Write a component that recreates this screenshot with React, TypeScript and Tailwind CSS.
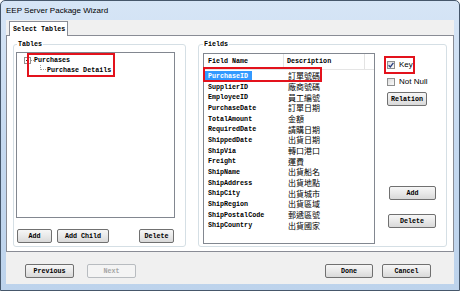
import React from "react";

const mono = "font-['Liberation_Mono',monospace] font-bold";
const sans = "font-['Liberation_Sans',sans-serif]";
const cjk = "font-['Noto_Sans_CJK_TC',sans-serif]";

const fields: [string, string][] = [
  ["PurchaseID", "訂單號碼"],
  ["SupplierID", "廠商號碼"],
  ["EmployeeID", "員工編號"],
  ["PurchaseDate", "訂單日期"],
  ["TotalAmount", "金額"],
  ["RequiredDate", "請購日期"],
  ["ShippedDate", "出貨日期"],
  ["ShipVia", "轉口港口"],
  ["Freight", "運費"],
  ["ShipName", "出貨船名"],
  ["ShipAddress", "出貨地點"],
  ["ShipCity", "出貨城市"],
  ["ShipRegion", "出貨區域"],
  ["ShipPostalCode", "郵遞區號"],
  ["ShipCountry", "出貨國家"],
];

function Btn({ label, className = "", disabled = false }: { label: string; className?: string; disabled?: boolean }) {
  return (
    <button
      type="button"
      className={`h-[14px] shrink-0 rounded-[2px] border text-[6.7px] leading-none ${mono} ${
        disabled
          ? "border-[#b8bcc0] bg-[#f4f4f4] text-[#a6a6a6]"
          : "border-[#707070] bg-linear-to-b from-[#f6f6f6] via-[#e9e9e9] to-[#d9d9d9] text-black"
      } ${className}`}
    >
      {label}
    </button>
  );
}

function Check({ checked }: { checked?: boolean }) {
  return (
    <div className="w-[8px] h-[8px] shrink-0 border border-[#8e8f8f] bg-linear-to-br from-[#dcdcdc] to-[#fafafa] flex items-center justify-center">
      {checked && (
        <svg width="6" height="6" viewBox="0 0 6 6">
          <path d="M0.6 3.2 L2.3 4.9 L5.4 0.8" fill="none" stroke="#2a3f80" strokeWidth="1.3" />
        </svg>
      )}
    </div>
  );
}

export default function App() {
  return (
    <div className="w-[461px] h-[297px] bg-white overflow-hidden">
      <div className="w-[460px] h-[291px] flex flex-col border border-[#46576b] rounded-t-[5px] bg-linear-to-b from-[#d6e5f6] via-[#c5d9f0] to-[#bdd3ec]">
        {/* title bar */}
        <div className={`h-[19px] shrink-0 pl-[5px] pt-[5px] text-[8px] leading-[10px] text-black ${sans}`}>
          EEP Server Package Wizard
        </div>

        {/* client area */}
        <div className="mx-[5px] h-[264px] flex flex-col bg-[#f0f0f0]">
          {/* tab strip */}
          <div className="h-[15px] shrink-0 flex">
            <div className={`relative z-10 ml-[3px] mt-[1px] h-[15px] w-[59px] border-x border-t border-[#898c95] bg-white pl-[3px] pt-[3px] text-[6.7px] leading-[8px] text-black ${mono}`}>
              Select Tables
            </div>
          </div>

          {/* tab panel */}
          <div className="h-[217px] shrink-0 border border-[#898c95] bg-white flex pl-[6px] pt-[4px] gap-[12px]">
            {/* Tables group */}
            <fieldset className="w-[173px] h-[207px] border border-[#d5dfe5] rounded-[3px] px-[2px] pt-[3px]">
              <legend className={`ml-[1px] px-[1px] text-[6.7px] leading-[9px] text-black ${mono}`}>Tables</legend>
              <div className={`relative w-[159px] h-[166px] border border-[#828790] bg-white text-[6.7px] leading-none text-black ${mono}`}>
                <div className="flex items-center h-[10px] mt-[2px]">
                  <div className="ml-[7px] w-[7px] h-[7px] border border-[#919191] bg-white flex items-center justify-center">
                    <div className="w-[3px] h-px bg-[#333]" />
                  </div>
                  <div className="w-[3px] border-t border-dotted border-[#a0a0a0]" />
                  <span>Purchases</span>
                </div>
                <div className="flex items-center h-[10px]">
                  <div className="ml-[23px] w-[6px] h-[10px] flex flex-col">
                    <div className="h-[5px] w-[6px] border-l border-b border-dotted border-[#a0a0a0]" />
                  </div>
                  <span className="ml-[1px]">Purchase Details</span>
                </div>
                <div className="absolute left-[10px] top-[0px] w-[88px] h-[24px] border-2 border-[#e3121c]" />
              </div>
              <div className="flex mt-[11px]">
                <Btn label="Add" className="ml-[1px] w-[35px]" />
                <Btn label="Add Child" className="ml-[5px] w-[52px]" />
                <Btn label="Delete" className="ml-[30px] w-[35px]" />
              </div>
            </fieldset>

            {/* Fields group */}
            <fieldset className="w-[249px] h-[207px] border border-[#d5dfe5] rounded-[3px] px-[4px] pt-[4px]">
              <legend className={`px-[1px] text-[6.7px] leading-[9px] text-black ${mono}`}>Fields</legend>
              <div className="flex">
                <div className="relative w-[172px] h-[191px] border border-[#828790] bg-white">
                  <div className={`flex h-[16px] border-b border-[#e5e5e5] text-[6.7px] leading-none text-black ${mono}`}>
                    <div className="w-[80px] pl-[4px] flex items-center border-r border-[#e3e3e3]">Field Name</div>
                    <div className="w-[81px] pl-[3px] flex items-center border-r border-[#e3e3e3]">Description</div>
                  </div>
                  <div className="pt-px">
                    {fields.map(([name, desc], i) => (
                      <div key={name} className="flex items-center h-[10.67px]">
                        <div className={`w-[81px] pl-px text-[6.7px] leading-none ${mono}`}>
                          {i === 0 ? (
                            <span className="inline-block bg-[#3399ff] text-white px-[3px] pr-[4px] py-[2px]">{name}</span>
                          ) : (
                            <span className="pl-[3px] text-black">{name}</span>
                          )}
                        </div>
                        <div className={`pl-[3px] text-[8px] leading-none text-black ${cjk}`}>{desc}</div>
                      </div>
                    ))}
                  </div>
                  <div className="absolute left-[-1px] top-[13px] w-[119px] h-[15px] border-2 border-[#e3121c]" />
                </div>

                <div className={`relative ml-[9px] pl-[3px] flex flex-col text-[8px] leading-none text-black ${sans}`}>
                  <div className="flex items-center mt-[8px] h-[8px]">
                    <Check checked />
                    <span className="ml-[4px]">Key</span>
                  </div>
                  <div className="flex items-center mt-[9px] h-[8px]">
                    <Check />
                    <span className="ml-[4px]">Not Null</span>
                  </div>
                  <Btn label="Relation" className="mt-[6px] w-[40px]" />
                  <Btn label="Add" className="mt-[80px] ml-[2px] w-[47px]" />
                  <Btn label="Delete" className="mt-[14px] ml-[1px] w-[48px]" />
                  <div className="absolute left-0 top-[3px] w-[31px] h-[18px] border-2 border-[#e3121c]" />
                </div>
              </div>
            </fieldset>
          </div>

          {/* bottom buttons */}
          <div className="flex pt-[12px]">
            <Btn label="Previous" className="ml-[19px] w-[49px]" />
            <Btn label="Next" disabled className="ml-[13px] w-[49px]" />
            <Btn label="Done" className="ml-auto w-[48px]" />
            <Btn label="Cancel" className="ml-[9px] mr-[23px] w-[49px]" />
          </div>
        </div>
      </div>
    </div>
  );
}
